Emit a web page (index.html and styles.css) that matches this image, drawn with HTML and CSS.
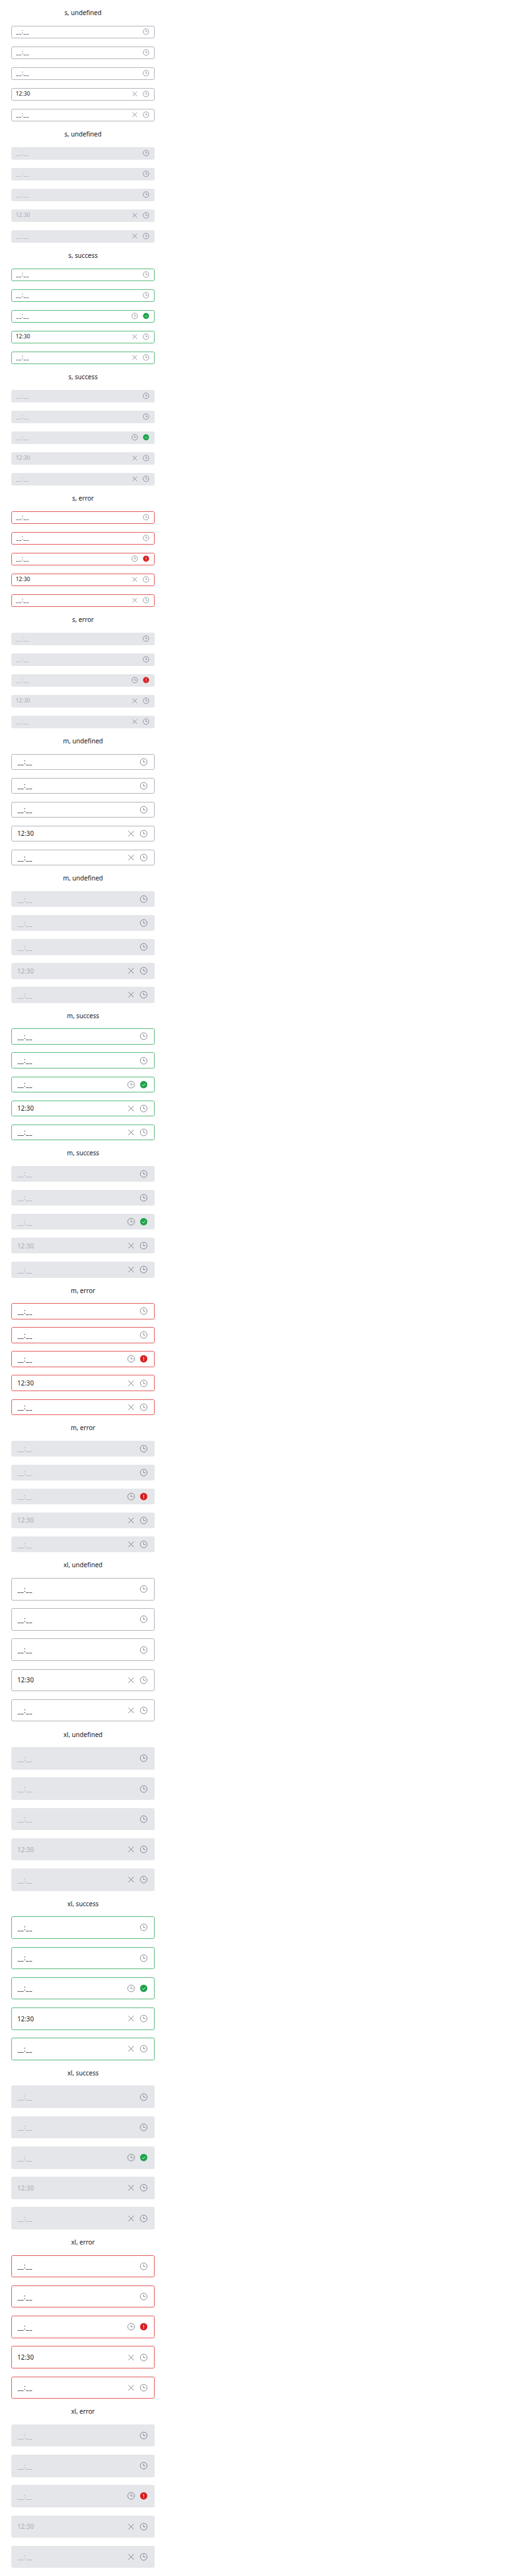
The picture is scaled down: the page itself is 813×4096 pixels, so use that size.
FILE: index.html
```html
<!DOCTYPE html>
<html lang="en">
<head>
<meta charset="utf-8">
<title>Time fields</title>
<link rel="stylesheet" href="styles.css">
</head>
<body>
<svg class="sprite" aria-hidden="true">
  <symbol id="clock" viewBox="0 0 24 24"><circle cx="12" cy="12" r="8.5" fill="none" stroke="currentColor" stroke-width="1.4"/><path d="M11.8 7.3V12.4H16.4" fill="none" stroke="currentColor" stroke-width="1.4"/></symbol>
  <symbol id="close" viewBox="0 0 24 24"><path d="M5.3 5.3L18.7 18.7M18.7 5.3L5.3 18.7" fill="none" stroke="currentColor" stroke-width="1.5"/></symbol>
  <symbol id="success" viewBox="0 0 24 24"><circle cx="12" cy="12" r="9.1" fill="currentColor"/><path d="M8.2 12.1L11.1 15L16.1 9.7" fill="none" stroke="#fff" stroke-width="1.4"/></symbol>
  <symbol id="error" viewBox="0 0 24 24"><circle cx="12" cy="12" r="9.1" fill="currentColor"/><path d="M12 7.3V13.6M12 15.2V16.8" fill="none" stroke="#fff" stroke-width="1.6"/></symbol>
</svg>
<main class="page" id="page"></main>
<script src="fields.js"></script>
</body>
</html>
```
FILE: styles.css
```css
:root {
  --u: 0.63487px;
}

html, body {
  margin: 0;
  background: #fff;
}

.sprite {
  display: none;
}

.page {
  height: 4096px;
  font-family: "Noto Sans", sans-serif;
  font-size: calc(16 * var(--u));
  color: #17171e;
}

.group {
  width: calc(360 * var(--u));
  height: calc(344 * var(--u));
  padding-left: calc(28 * var(--u));
}

.group.s {
  height: calc(304 * var(--u));
}

.group.xl {
  height: calc(424 * var(--u));
}

.title {
  height: calc(64 * var(--u));
  line-height: calc(64 * var(--u));
  text-align: center;
}

.fields {
  display: flex;
  flex-direction: column;
  gap: calc(20 * var(--u));
}

.field {
  display: flex;
  align-items: center;
  gap: calc(8 * var(--u));
  box-sizing: border-box;
  height: calc(40 * var(--u));
  padding: 0 calc(16 * var(--u) - 1px);
  border: 1px solid #b1b3bb;
  border-radius: calc(4 * var(--u));
}

.value {
  flex: 1;
  line-height: 1;
  text-indent: calc(-0.8 * var(--u));
  letter-spacing: calc(0.15 * var(--u));
}

.mask {
  text-indent: 0;
  letter-spacing: calc(0.9 * var(--u));
}

.icon {
  width: calc(24 * var(--u));
  height: calc(24 * var(--u));
  color: #757882;
}

.s .field {
  height: calc(32 * var(--u));
  padding: 0 calc(12 * var(--u) - 1px);
  font-size: calc(14 * var(--u));
}

.s .icon {
  width: calc(20 * var(--u));
  height: calc(20 * var(--u));
}

.xl .field {
  height: calc(56 * var(--u));
}

.success .field {
  border-color: #55b977;
}

.error .field {
  border-color: #e45858;
}

.disabled .field {
  background: #e4e6ea;
  border-color: #e4e6ea;
  color: #a9abb4;
}

.field .icon.success {
  color: #1ea34b;
}

.field .icon.error {
  color: #db1f22;
}
```
FILE: fields.js
```js
const page = document.getElementById('page');
const icon = (name) => `<svg class="icon ${name}"><use href="#${name}"/></svg>`;

function field(text, icons) {
  const kind = text === '12:30' ? 'value' : 'value mask';
  return `<div class="field"><span class="${kind}">${text}</span>${icons.map(icon).join('')}</div>`;
}

for (const size of ['s', 'm', 'xl']) {
  for (const status of ['undefined', 'success', 'error']) {
    for (const state of ['enabled', 'disabled']) {
      const statusIcons = status === 'undefined' ? ['clock'] : ['clock', status];
      page.insertAdjacentHTML('beforeend', `
        <section class="group ${size} ${status} ${state}">
          <div class="title">${size}, ${status}</div>
          <div class="fields">
            ${field('__:__', ['clock'])}
            ${field('__:__', ['clock'])}
            ${field('__:__', statusIcons)}
            ${field('12:30', ['close', 'clock'])}
            ${field('__:__', ['close', 'clock'])}
          </div>
        </section>`);
    }
  }
}
```
